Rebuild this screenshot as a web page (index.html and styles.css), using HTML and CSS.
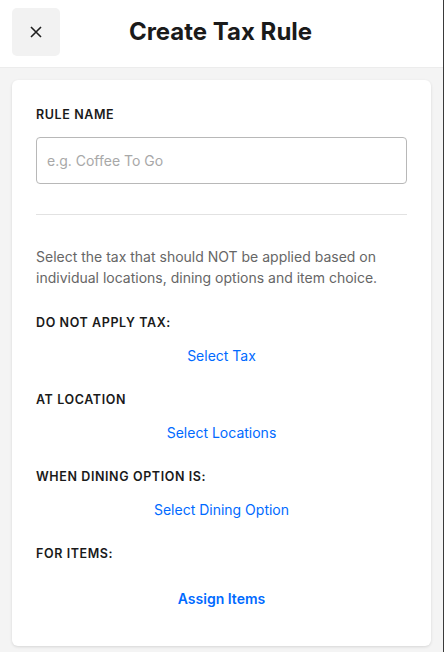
FILE: index.html
```html
<!DOCTYPE html>
<html lang="en">
<head>
<meta charset="utf-8">
<title>Create Tax Rule</title>
<link rel="stylesheet" href="styles.css">
</head>
<body>
<div class="page">
  <header class="header">
    <button class="close" aria-label="Close">
      <svg width="12" height="12" viewBox="0 0 12 12"><path d="M1 1 L11 11 M11 1 L1 11" stroke="#1f1f1f" stroke-width="1.6" fill="none"/></svg>
    </button>
    <h1 class="title">Create Tax Rule</h1>
  </header>
  <main class="content">
    <section class="card">
      <div class="label first">RULE NAME</div>
      <input class="input" type="text" placeholder="e.g. Coffee To Go">
      <hr class="divider">
      <p class="desc">Select the tax that should NOT be applied based on individual locations, dining options and item choice.</p>
      <div class="label">DO NOT APPLY TAX:</div>
      <a class="link">Select Tax</a>
      <div class="label">AT LOCATION</div>
      <a class="link">Select Locations</a>
      <div class="label">WHEN DINING OPTION IS:</div>
      <a class="link">Select Dining Option</a>
      <div class="label">FOR ITEMS:</div>
      <a class="link strong">Assign Items</a>
    </section>
  </main>
</div>
</body>
</html>
```
FILE: styles.css
```css
* { box-sizing: border-box; }
html, body { margin: 0; padding: 0; height: 100%; }
body {
  font-family: Inter, "Noto Sans", sans-serif;
  color: #1a1a1a;
  background: #f4f4f4;
}
.page {
  height: 652px;
  width: 444px;
  border-right: 1px solid #3a3a3a;
  background: #f4f4f4;
  display: flex;
  flex-direction: column;
}
.header {
  height: 68px;
  background: #fff;
  border-bottom: 1px solid #ececec;
  display: flex;
  align-items: center;
  padding: 0 12px;
}
.close {
  width: 48px;
  height: 48px;
  border: none;
  border-radius: 5px;
  background: #f2f2f2;
  display: flex;
  align-items: center;
  justify-content: center;
  padding: 0;
  margin-top: -4px;
}
.title {
  flex: 1;
  margin: -4px 50px 0 0;
  text-align: center;
  font-size: 24px;
  font-weight: 700;
  color: #1a1a1a;
}
.content {
  padding: 12px 12px 5px 12px;
  flex: 1;
}
.card {
  background: #fff;
  border-radius: 6px;
  box-shadow: 0 1px 3px rgba(0,0,0,0.12);
  padding: 0 24px;
  height: 566px;
  display: flex;
  flex-direction: column;
}
.label {
  font-size: 12.5px;
  font-weight: 600;
  letter-spacing: 0.6px;
  color: #1a1a1a;
  line-height: 16px;
  margin-top: 27px;
}
.input {
  margin-top: 14px;
  height: 47px;
  border: 1px solid #b8b8b8;
  border-radius: 4px;
  padding: 0 10px;
  font-family: inherit;
  font-size: 14px;
  color: #1a1a1a;
  outline: none;
}
.input::placeholder { color: #a8a8a8; }
.divider {
  border: none;
  border-top: 1px solid #e2e2e2;
  margin: 30px 0 0 0;
}
.desc {
  margin: 31px 0 0 0;
  font-size: 14px;
  line-height: 21px;
  color: #666;
}
.link {
  display: block;
  text-align: center;
  color: #006aff;
  font-size: 14px;
  line-height: 18px;
  margin-top: 16px;
}
.link.strong { font-weight: 600; margin-top: 28px; }
```
